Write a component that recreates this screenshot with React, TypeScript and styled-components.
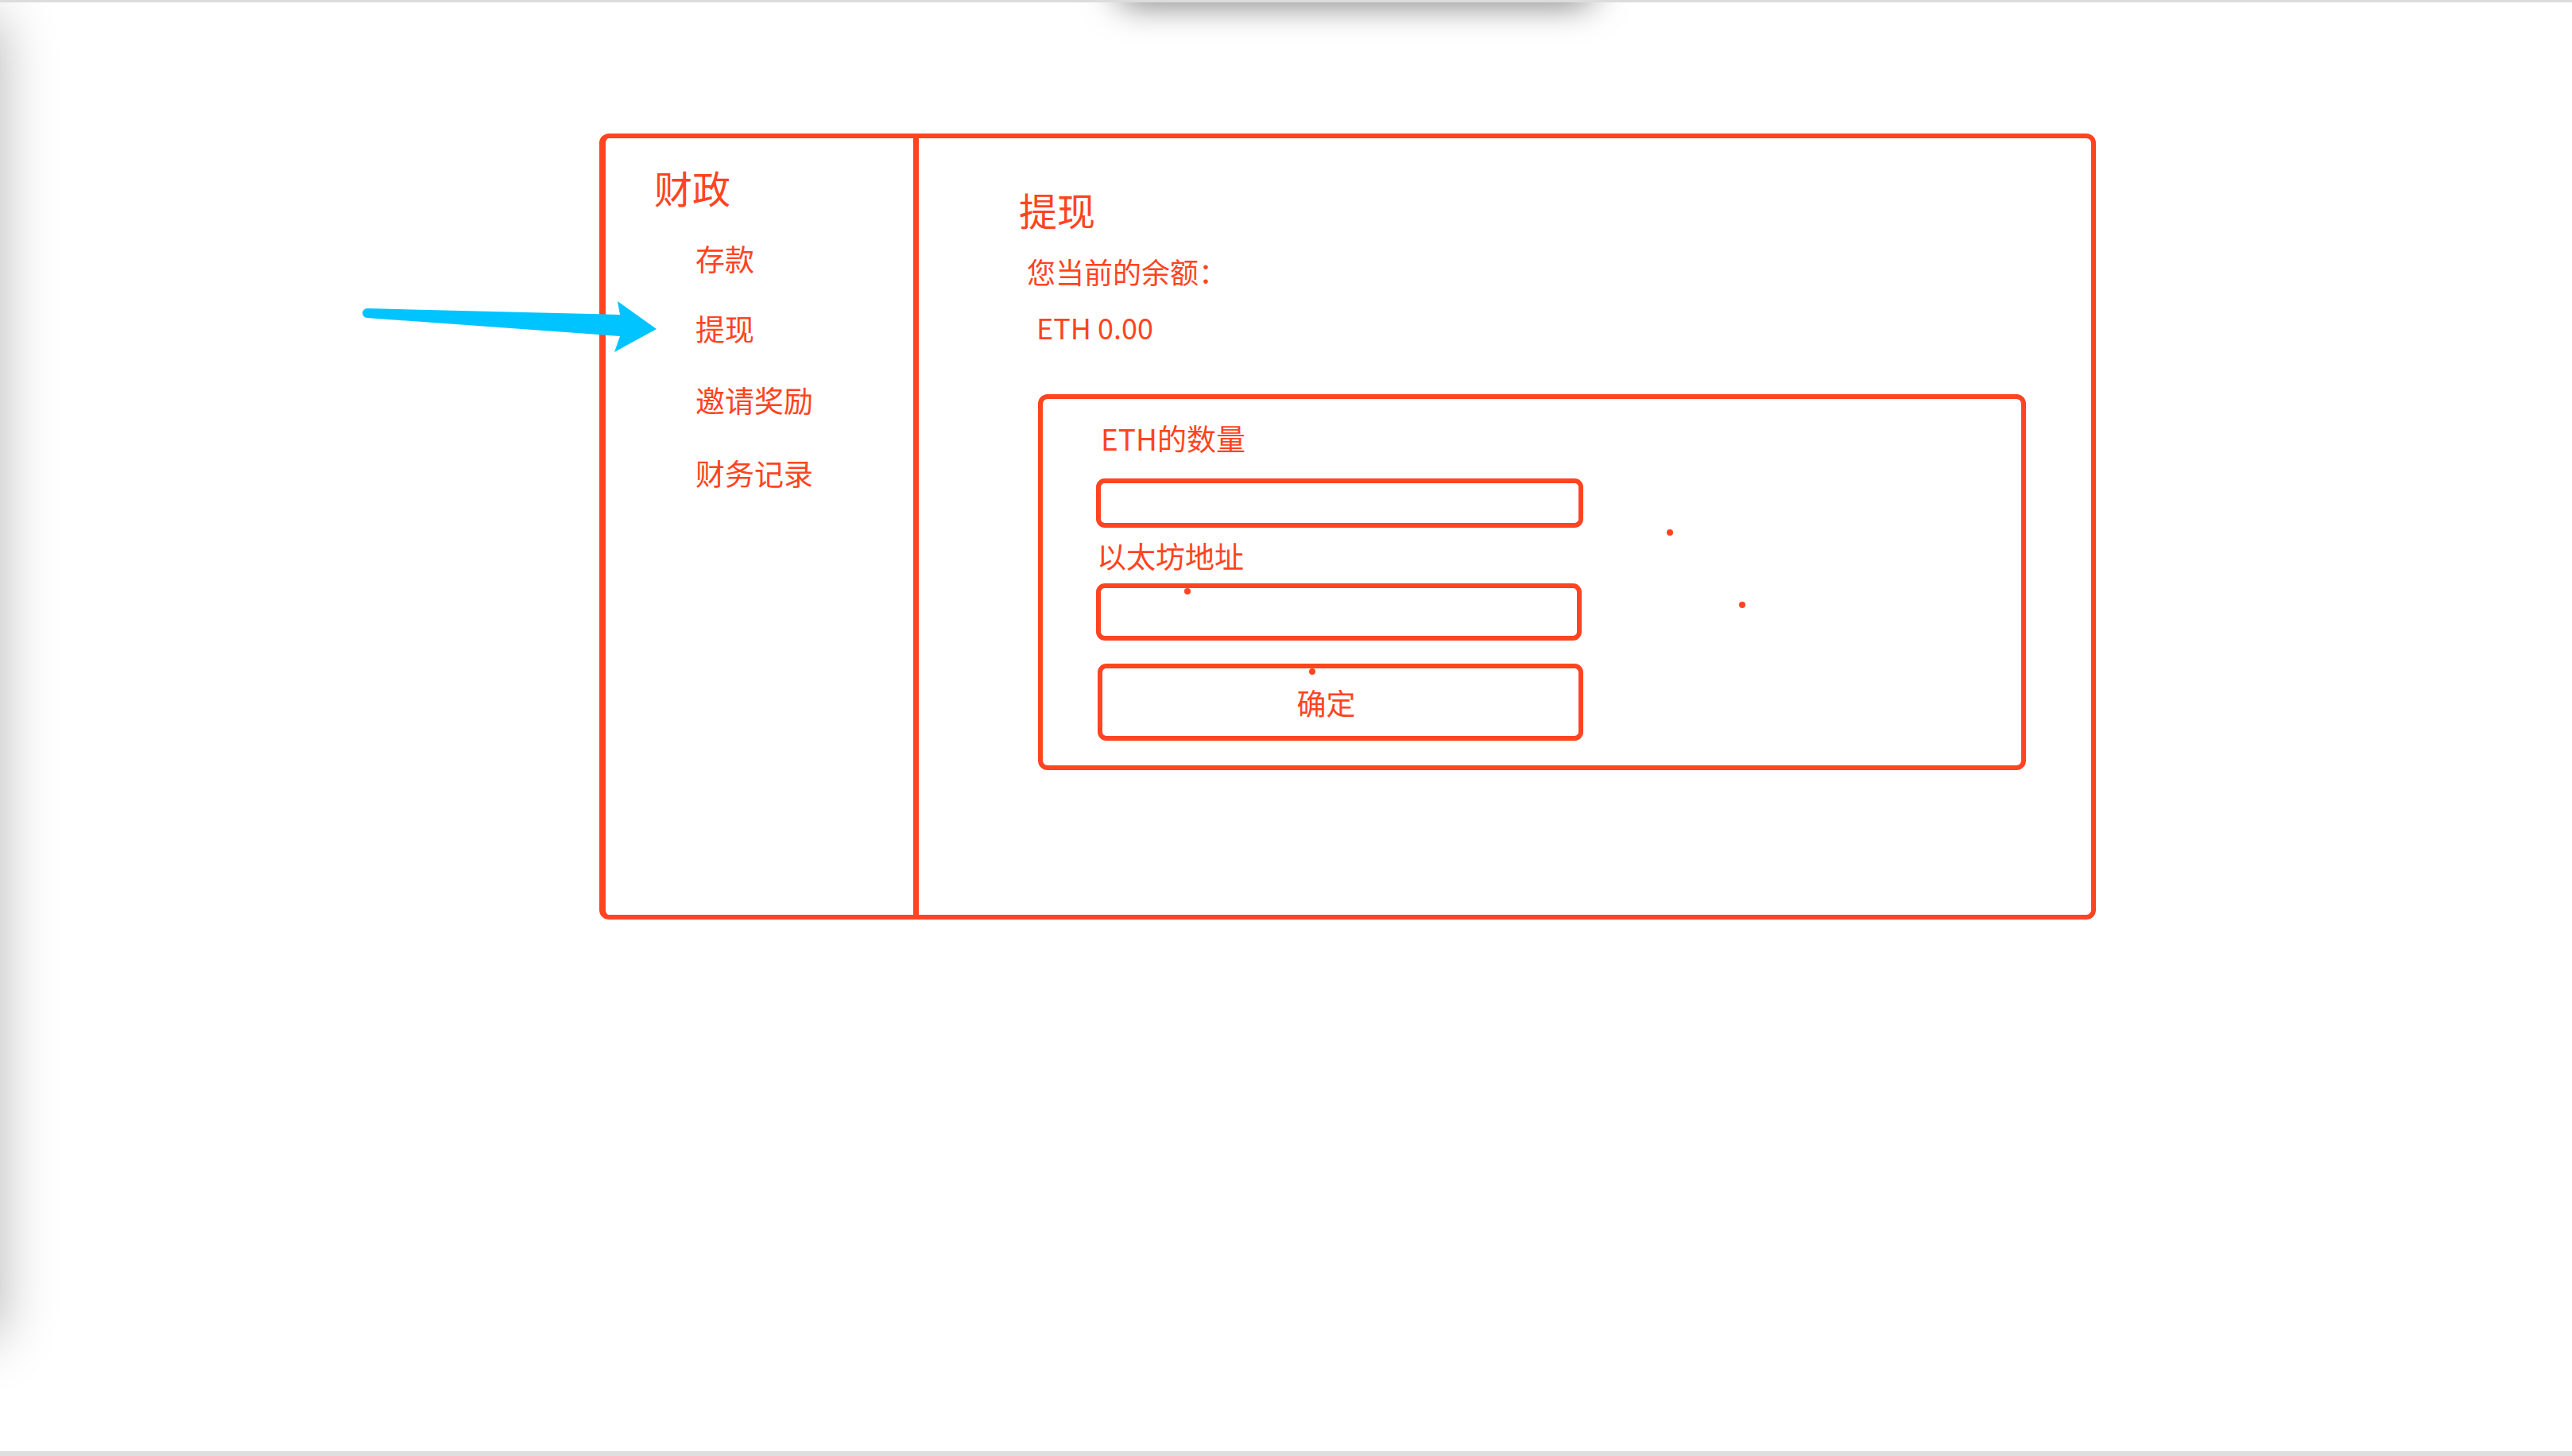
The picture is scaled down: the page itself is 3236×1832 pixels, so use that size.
import React from "react";
import styled, { createGlobalStyle } from "styled-components";

const RED = "#ff4422";

const GlobalStyle = createGlobalStyle`
  html, body {
    margin: 0;
    padding: 0;
    background: #ffffff;
  }
  body {
    font-family: "Noto Sans CJK SC", "Noto Sans", sans-serif;
    color: ${RED};
  }
`;

// the whole screen, with the gray frame lines and soft shadows of the capture
const Screen = styled.div`
  position: relative;
  box-sizing: border-box;
  height: 1832px;
  overflow: hidden;
  border-top: 3px solid #dcdcdc;
  border-bottom: 6px solid #dedede;
  padding: 165px 0 0 754px;

  &::before {
    content: "";
    position: absolute;
    left: -80px;
    top: 20px;
    width: 80px;
    height: 1660px;
    box-shadow: 0 0 70px rgba(0, 0, 0, 0.3);
  }

  &::after {
    content: "";
    position: absolute;
    left: 1405px;
    top: -40px;
    width: 600px;
    height: 40px;
    border-radius: 20px;
    box-shadow: 0 0 45px rgba(0, 0, 0, 0.6);
  }
`;

const Frame = styled.div`
  display: flex;
  box-sizing: border-box;
  width: 1883px;
  height: 989px;
  border: 6px solid ${RED};
  border-left-width: 8px;
  border-radius: 12px;
`;

const Sidebar = styled.aside`
  box-sizing: border-box;
  width: 394px;
  border-right: 7px solid ${RED};
  padding: 31px 0 0 61px;
`;

const SideTitle = styled.h2`
  margin: 0;
  font-size: 48px;
  font-weight: 400;
  line-height: 60px;
`;

const NavList = styled.ul`
  list-style: none;
  margin: 16px 0 0;
  padding: 0 0 0 52px;
`;

const NavItem = styled.li<{ $h: number }>`
  font-size: 37px;
  line-height: ${(p) => p.$h}px;
  height: ${(p) => p.$h}px;
`;

const Main = styled.main`
  flex: 1;
  padding: 59px 0 0 126px;
`;

const PageTitle = styled.h1`
  margin: 0;
  font-size: 48px;
  font-weight: 400;
  line-height: 60px;
`;

const InfoLine = styled.div<{ $indent: number; $gap: number }>`
  margin: ${(p) => p.$gap}px 0 0 ${(p) => p.$indent}px;
  font-size: 36px;
  line-height: 50px;
`;

const WithdrawBox = styled.section`
  position: relative;
  box-sizing: border-box;
  width: 1243px;
  height: 473px;
  margin: 60px 0 0 24px;
  border: 6px solid ${RED};
  border-radius: 12px;
  padding: 24px 0 0 67px;
  display: flex;
  flex-direction: column;
  align-items: flex-start;
`;

const FieldLabel = styled.label<{ $indent: number; $gap: number }>`
  margin: ${(p) => p.$gap}px 0 0 ${(p) => p.$indent}px;
  font-size: 37px;
  line-height: 50px;
`;

const TextField = styled.input<{ $w: number; $h: number; $gap: number }>`
  box-sizing: border-box;
  width: ${(p) => p.$w}px;
  height: ${(p) => p.$h}px;
  margin: ${(p) => p.$gap}px 0 0;
  border: 6px solid ${RED};
  border-radius: 11px;
  background: #ffffff;
  outline: none;
  padding: 0 16px;
  font-family: inherit;
  font-size: 32px;
  color: ${RED};
`;

const SubmitButton = styled.button`
  box-sizing: border-box;
  width: 611px;
  height: 97px;
  margin: 29px 0 0 2px;
  border: 6px solid ${RED};
  border-radius: 11px;
  background: #ffffff;
  padding: 0 36px 0 0;
  font-family: inherit;
  font-size: 37px;
  color: ${RED};
  cursor: pointer;
`;

// stray red specks that sit on top of the form
const Speck = styled.span<{ $x: number; $y: number }>`
  position: absolute;
  left: ${(p) => p.$x - 4}px;
  top: ${(p) => p.$y - 4}px;
  width: 8px;
  height: 8px;
  border-radius: 50%;
  background: ${RED};
`;

// blue annotation arrow pointing at the active menu item
const Pointer = styled.svg`
  position: absolute;
  left: 450px;
  top: 367px;
  width: 390px;
  height: 80px;
  overflow: visible;
`;

const navItems = [
  { label: "存款", h: 88 },
  { label: "提现", h: 88 },
  { label: "邀请奖励", h: 92 },
  { label: "财务记录", h: 92 },
];

const specks = [
  { x: 789, y: 168 },
  { x: 880, y: 259 },
  { x: 182, y: 242 },
  { x: 339, y: 343 },
];

export default function App() {
  return (
    <>
      <GlobalStyle />
      <Screen>
        <Frame>
          <Sidebar>
            <SideTitle>财政</SideTitle>
            <NavList>
              {navItems.map((item) => (
                <NavItem key={item.label} $h={item.h}>
                  {item.label}
                </NavItem>
              ))}
            </NavList>
          </Sidebar>
          <Main>
            <PageTitle>提现</PageTitle>
            <InfoLine $indent={10} $gap={23}>
              您当前的余额：
            </InfoLine>
            <InfoLine $indent={22} $gap={20}>
              ETH 0.00
            </InfoLine>
            <WithdrawBox>
              <FieldLabel $indent={6} $gap={0}>
                ETH的数量
              </FieldLabel>
              <TextField $w={613} $h={62} $gap={26} />
              <FieldLabel $indent={1} $gap={10}>
                以太坊地址
              </FieldLabel>
              <TextField $w={611} $h={72} $gap={10} />
              <SubmitButton>确定</SubmitButton>
              {specks.map((s) => (
                <Speck key={`${s.x}-${s.y}`} $x={s.x} $y={s.y} />
              ))}
            </WithdrawBox>
          </Main>
        </Frame>
        <Pointer viewBox="0 0 390 80">
          <path
            d="M 12 18 L 330 26 L 327 9 L 376 44 L 323 73 L 330 53 L 12 30 A 6 6 0 0 1 12 18 Z"
            fill="#00c4ff"
          />
        </Pointer>
      </Screen>
    </>
  );
}
